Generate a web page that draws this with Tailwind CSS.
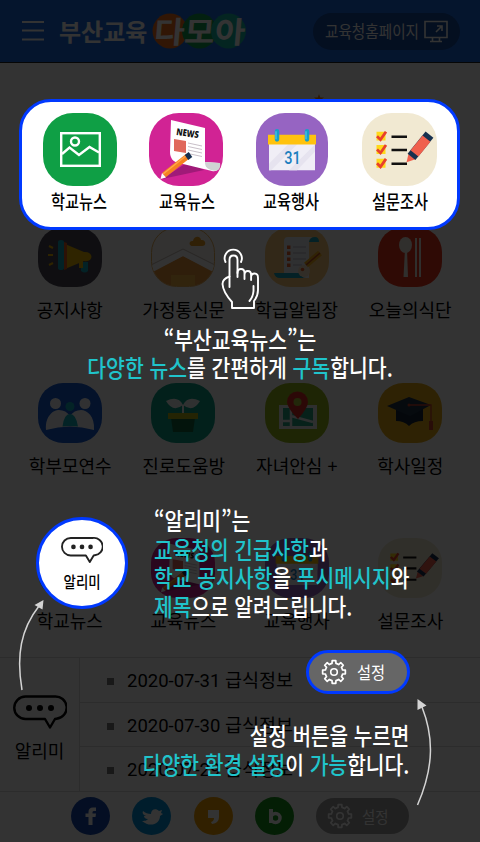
<!DOCTYPE html>
<html lang="ko">
<head>
<meta charset="utf-8">
<title>부산교육 다모아</title>
<script src="https://cdn.jsdelivr.net/npm/@tailwindcss/browser@4"></script>
</head>
<body class="bg-white">
<svg width="0" height="0" class="absolute">
  <defs>
    <symbol id="pic" viewBox="0 0 74 73" preserveAspectRatio="none">
      <rect width="74" height="73" rx="30" fill="#0f9f45"/>
      <g fill="none" stroke="#fff" stroke-width="2.4"><rect x="18.2" y="20.2" width="38.6" height="32.6"/><circle cx="32" cy="28.5" r="4"/><path d="M19 41l7.500-6.500L36 42l10.500-8L56 39.500"/></g>
    </symbol>
    <symbol id="news" viewBox="0 0 74 73" preserveAspectRatio="none">
      <rect width="74" height="73" rx="30" fill="#d12394"/>
      <path d="M13 66l42-9-16-8z" fill="#a01a78"/>
      <path d="M22 7l34 8v34l14 1c1 6-2 9-7 8L30 50c-6-1-9-5-9-11z" fill="#fff"/>
      <path d="M56 49l15 1c1 6-2 8.500-7 7.500C58 56 56 54 56 49z" fill="#cfd3d3"/>
      <text x="27" y="22" transform="rotate(8 27 22)" font-family="Open Sans" font-weight="800" font-size="9.500" textLength="22.500" lengthAdjust="spacingAndGlyphs" fill="#111">NEWS</text>
      <path d="M25 26l12 2v12l-12-2z" fill="#e0685c"/>
      <path d="M39 30l14 3M39 33.500l14 3M39 37l14 3M39 40.500l14 3" stroke="#c9c0c9" stroke-width="1"/>
      <path d="M15 62L39 43" stroke="#f58220" stroke-width="5.500"/><path d="M14 61L38 42" stroke="#ffa64d" stroke-width="1.500"/>
      <path d="M11.500 66l1.500-6 4 4.500z" fill="#fff"/><path d="M37.500 44.500l4-3" stroke="#17304f" stroke-width="6"/>
    </symbol>
    <symbol id="cal" viewBox="0 0 72 72" preserveAspectRatio="none">
      <rect width="72" height="72" rx="29" fill="#9664c2"/>
      <path d="M13 30h46v26.500H13z" fill="#f0eef6"/><path d="M13 50l20-20h9L15 56.500h-2zM33 56.500L59 31v7L41 56.500z" fill="#e6e3ef"/>
      <path d="M12 21.500h48V31H12z" fill="#ffc20e"/>
      <path d="M21 18v8M51 18v8" stroke="#159fc9" stroke-width="4.500" stroke-linecap="round"/><path d="M20 18v8M50 18v8" stroke="#4dc4e2" stroke-width="1.300"/>
      <text x="36.500" y="50.500" text-anchor="middle" font-family="Roboto" font-weight="500" font-size="18" textLength="16.500" lengthAdjust="spacingAndGlyphs" fill="#1c7fbf">31</text>
    </symbol>
    <symbol id="survey" viewBox="0 0 75 74" preserveAspectRatio="none">
      <rect width="75" height="74" rx="30" fill="#f1e9d2"/>
      <path d="M14.500 19h9v9h-9zM14.500 32.500h9v9h-9zM14.500 46.500h9v9h-9z" fill="#ffd91a"/>
      <path d="M15 23.500l3.500 3.500 5.500-8M15 37l3.500 3.500 5.500-8M15 51l3.500 3.500 5.500-8" fill="none" stroke="#e8402c" stroke-width="2.800"/>
      <path d="M29.500 24H45M29.500 37.500H45M29.500 51.500H45" stroke="#111" stroke-width="2.600"/>
      <path d="M44.500 50l2-8.500 7 5.500z" fill="#f0604d"/>
      <path d="M49.500 44.500L67.500 22" stroke="#17304f" stroke-width="10"/><path d="M52.500 41L64.500 26" stroke="#f0604d" stroke-width="10"/>
    </symbol>
    <symbol id="bubble" viewBox="0 0 54 34">
      <path d="M12.500 1.500h29a11 11 0 0 1 2 22.200L42 24l-5 8.500L32 24H12.500a11.200 11.200 0 0 1 0-22.500z" fill="none" stroke="currentColor" stroke-width="2.400" stroke-linejoin="round"/>
      <circle cx="16" cy="13" r="3" fill="currentColor"/><circle cx="27" cy="13" r="3" fill="currentColor"/><circle cx="38" cy="13" r="3" fill="currentColor"/>
    </symbol>
    <symbol id="gear" viewBox="-13 -13 26 26">
      <path d="M8.570-1.980L11.360-1.800V1.800L8.570 1.980A8.800 8.800 0 0 1 7.460 4.660L9.300 6.760 6.760 9.300 4.660 7.460A8.800 8.800 0 0 1 1.980 8.570L1.800 11.360H-1.800L-1.980 8.570A8.800 8.800 0 0 1-4.660 7.460L-6.760 9.300-9.300 6.760-7.460 4.660A8.800 8.800 0 0 1-8.570 1.980L-11.360 1.800V-1.800L-8.570-1.980A8.800 8.800 0 0 1-7.460-4.660L-9.300-6.760-6.760-9.300-4.660-7.460A8.800 8.800 0 0 1-1.980-8.570L-1.800-11.360H1.800L1.980-8.570A8.800 8.800 0 0 1 4.660-7.460L6.760-9.300 9.300-6.760 7.460-4.660A8.800 8.800 0 0 1 8.570-1.980Z" fill="none" stroke="currentColor" stroke-width="1.700" stroke-linejoin="round"/>
      <circle r="3.300" fill="none" stroke="currentColor" stroke-width="1.600"/>
    </symbol>
  </defs>
</svg>

<div class="relative w-[480px] h-[842px] overflow-hidden bg-white text-black font-['Noto_Sans_CJK_KR',sans-serif]">
  <!-- App screen -->
  <div class="flex flex-col h-full">
    <header class="flex items-center h-[63px] shrink-0 bg-[#1c6ae0] border-b border-[#222] pl-[22px] pr-5 text-white">
      <svg width="22" height="20" viewBox="0 0 22 20" stroke="#fff" stroke-width="1.800"><path d="M0 1h22M0 9.500h22M0 18.500h22"/></svg>
      <span class="ml-[15px] w-[88px] text-[24px] leading-none font-bold whitespace-nowrap">부산교육</span>
      <svg class="ml-[4px] overflow-visible" width="96" height="40" viewBox="0 0 96 40">
        <circle cx="19" cy="20" r="17.500" fill="#f2701d"/><circle cx="48.500" cy="20" r="17.500" fill="#12a050"/><circle cx="77.500" cy="20" r="17.500" fill="#14b8a6"/>
        <text x="5" y="31.500" transform="skewX(-5)" font-size="30" font-weight="700" textLength="91" lengthAdjust="spacingAndGlyphs" fill="#fff" font-family="Noto Sans CJK KR">다모아</text>
      </svg>
      <div class="ml-auto flex items-center justify-between w-[147px] h-[37px] rounded-full bg-[#144a9e] pl-3 pr-3">
        <span class="w-[94px] text-[16.5px] leading-none whitespace-nowrap"><span class="inline-block origin-left scale-x-[.885]">교육청홈페이지</span></span>
        <svg width="24" height="23" viewBox="0 0 24 23" fill="none" stroke="#fff" stroke-width="1.600"><path d="M1 1.500h22v16H1zM8.500 17.500v3.500M15.500 17.500v3.500M6 21.500h12M12 12l6-6M13 6h5v5"/></svg>
      </div>
    </header>

    <main class="relative h-[594px] shrink-0 px-[13px] pt-[164px]">
      <svg class="absolute left-[314px] top-[31px]" width="10" height="10" viewBox="0 0 10 10"><path d="M5 0l1.300 3.500H10L7 5.800 8.200 10 5 7.500 1.800 10 3 5.800 0 3.500h3.700z" fill="#f08a24"/></svg>
      <div class="grid grid-cols-4 auto-rows-[155.5px] text-[18px] leading-[26px]">
        <div class="flex flex-col items-center gap-[9px] whitespace-nowrap">
          <svg width="64" height="60" viewBox="0 0 64 60"><rect width="64" height="60" rx="25" fill="#4b4856"/><path d="M27 17l19 8c10-1 10 11 0 9l-19 8z" fill="#e8b400"/><path d="M26 15l3 1v26l-3 1z" fill="#e05a20"/><path d="M20 15q0-2 3-2t3 2v26q0 2-3 2t-3-2zM43 35h7v9q-3 3-7 0z" fill="#10a8bc"/><path d="M41 34h3v6h-3M11 19l4 2M10 28h5M11 38l4-2" stroke="#e8b400" stroke-width="2" fill="#e8b400"/></svg>
          <span>공지사항</span>
        </div>
        <div class="flex flex-col items-center gap-[9px] whitespace-nowrap">
          <svg width="64" height="60" viewBox="0 0 64 60"><defs><clipPath id="hc"><rect x="1" y="1" width="62" height="58" rx="24"/></clipPath></defs><rect x=".5" y=".5" width="63" height="59" rx="25" fill="#fdf8f4" stroke="#eab25c"/><g clip-path="url(#hc)"><path d="M0 46l32-17 32 17v14H0z" fill="#e9963a"/><path d="M0 39l32-16 32 16v6L32 29 0 45z" fill="#fff"/><path d="M0 38l32-16 32 16" fill="none" stroke="#c9bdb5"/><path d="M20 48h24v12H20z" fill="#f2b440"/></g><path d="M42 19c-5 0-4-6 0-5 1-6 8-5 8-1 5-1 6 6 1 6z" fill="#f0a020"/></svg>
          <span class="ml-px">가정통신문</span>
        </div>
        <div class="flex flex-col items-center gap-[9px] whitespace-nowrap">
          <svg width="64" height="60" viewBox="0 0 64 60"><rect width="64" height="60" rx="25" fill="#f9c877"/><path d="M23 10h27q-6 0-6 5v36H19V14q0-4 4-4z" fill="#eceef4"/><path d="M44 15q1-5 6-5 4 0 4 5zM9 46h27q0 5 5 5H15q-5 0-6-5z" fill="#14a7bc"/><path d="M28 20h13M28 26h13M28 32h13M28 38h9" stroke="#cfd3dd" stroke-width="2"/><path d="M22 18.500h3.500V22H22zM22 24.500h3.500V28H22zM22 30.500h3.500V34H22zM22 36.500h3.500V40H22z" fill="#e8622c"/><circle cx="39" cy="44" r="6" fill="#f5dfc2"/><path d="M41 38l14-12" stroke="#f2b01c" stroke-width="6"/><path d="M41 38l14-12" stroke="#c04a20" stroke-width="1.500"/><circle cx="37.500" cy="42.500" r="1.800" fill="#e8622c"/></svg>
          <span>학급알림장</span>
        </div>
        <div class="flex flex-col items-center gap-[9px] whitespace-nowrap">
          <svg width="64" height="60" viewBox="0 0 64 60"><rect width="64" height="60" rx="25" fill="#e8351a"/><ellipse cx="27.500" cy="18" rx="6.500" ry="8" fill="#f0e8e0"/><path d="M27 22h2l1 28h-4.500zM37 11h2v39h-2zM41 11h2v39h-2z" fill="#f0e8e0"/></svg>
          <span>오늘의식단</span>
        </div>

        <div class="flex flex-col items-center gap-[9px] whitespace-nowrap">
          <svg width="64" height="60" viewBox="0 0 64 60"><rect width="64" height="60" rx="25" fill="#1459d2"/><circle cx="17.500" cy="20.500" r="5.500" fill="#f4f6fa"/><circle cx="47" cy="20.500" r="5.500" fill="#f4f6fa"/><path d="M8 47C7 32 16 27 21 27q7 0 11 6 4-6 11-6c6 0 14 6 13 20Q32 40 8 47z" fill="#f4f6fa"/><circle cx="32" cy="23.500" r="4.500" fill="#12b0bd"/><path d="M24.500 43.500Q26 31 32 31t8 12.500q-8-1-15.500 0z" fill="#12b0bd"/></svg>
          <span class="ml-px">학부모연수</span>
        </div>
        <div class="flex flex-col items-center gap-[9px] whitespace-nowrap">
          <svg width="64" height="60" viewBox="0 0 64 60"><rect width="64" height="60" rx="25" fill="#0ca189"/><path d="M32 22v9" stroke="#f0f4f2" stroke-width="2"/><path d="M32 22q-10 8-17-4 12-6 17 4zM32 22q10 8 17-4-12-6-17 4z" fill="#f0f4f2"/><path d="M20 35h24l-2 14H22z" fill="#11663f"/><path d="M17 30h30v6H17z" fill="#b5b315"/></svg>
          <span class="ml-px">진로도움방</span>
        </div>
        <div class="flex flex-col items-center gap-[9px] whitespace-nowrap">
          <svg width="64" height="60" viewBox="0 0 64 60"><rect width="64" height="60" rx="25" fill="#98b71b"/><path d="M14 22h38v24H14z" fill="#e5e8eb"/><path d="M18 25h30v18H18z" fill="#27a584"/><path d="M26 25v18M18 38h8M26 33l22 6" stroke="#e5e8eb" stroke-width="2.500"/><path d="M33 36Q22 25 22 19a10 10 0 0 1 21 0q0 6-10 17z" fill="#dd2b25"/><circle cx="32.500" cy="19" r="4" fill="#a8c334"/></svg>
          <span>자녀안심 +</span>
        </div>
        <div class="flex flex-col items-center gap-[9px] whitespace-nowrap">
          <svg width="64" height="60" viewBox="0 0 64 60"><rect width="64" height="60" rx="25" fill="#e6ab16"/><path d="M18 25l14 6 13-6v13q-9 0-14 5-5-5-13-5z" fill="#16273a"/><path d="M9 23l22-9 22 8-21 11z" fill="#213349"/><path d="M31 22h22v16" fill="none" stroke="#c8402b" stroke-width="1.300"/><circle cx="31" cy="22" r="1.500" fill="#c8402b"/><path d="M51 38h4v9h-4z" fill="#c8402b"/></svg>
          <span>학사일정</span>
        </div>

        <div class="flex flex-col items-center gap-[9px] whitespace-nowrap"><svg width="64" height="60"><use href="#pic" width="64" height="60"/></svg><span>학교뉴스</span></div>
        <div class="flex flex-col items-center gap-[9px] whitespace-nowrap"><svg width="64" height="60"><use href="#news" width="64" height="60"/></svg><span>교육뉴스</span></div>
        <div class="flex flex-col items-center gap-[9px] whitespace-nowrap"><svg width="64" height="60"><use href="#cal" width="64" height="60"/></svg><span>교육행사</span></div>
        <div class="flex flex-col items-center gap-[9px] whitespace-nowrap"><svg width="64" height="60"><use href="#survey" width="64" height="60"/></svg><span>설문조사</span></div>
      </div>
    </main>

    <section class="flex h-[135px] shrink-0 border-y border-[#dcdcdc]">
      <div class="flex flex-col items-center w-[80px] border-r border-[#dcdcdc] pt-[37px] gap-[8px]">
        <svg width="54" height="34"><use href="#bubble" width="54" height="34"/></svg>
        <span class="text-[18px] leading-[26px]">알리미</span>
      </div>
      <ul class="flex-1 flex flex-col divide-y divide-[#dcdcdc] text-[18.5px] font-[Roboto,'Noto_Sans_CJK_KR',sans-serif]">
        <li class="flex-1 flex items-center gap-[13px] pl-[27px] pt-[4px]"><i class="size-[7px] bg-[#777] -mt-px"></i><span>2020-07-31 급식정보</span></li>
        <li class="flex-1 flex items-center gap-[13px] pl-[27px] pt-[4px]"><i class="size-[7px] bg-[#777] -mt-px"></i><span>2020-07-30 급식정보</span></li>
        <li class="flex-1 flex items-center gap-[13px] pl-[27px] pt-[4px]"><i class="size-[7px] bg-[#777] -mt-px"></i><span>2020-07-29 급식정보</span></li>
      </ul>
    </section>

    <footer class="flex-1 flex items-center pl-[71px] pb-[2px] gap-[22.3px]">
      <svg width="39" height="38" viewBox="0 0 39 38"><ellipse cx="19.500" cy="19" rx="19.500" ry="19" fill="#1749ae"/><path d="M17.500 28V20H14.500v-3.500h3V15q0-4.500 4.500-4.500h3V14h-2q-1.500 0-1.500 1.300v1.200H25l-.5 3.500h-3v8z" fill="#fff"/></svg>
      <svg width="39" height="38" viewBox="0 0 39 38"><ellipse cx="19.500" cy="19" rx="19.500" ry="19" fill="#0393dd"/><path d="M10 24c4 0 5-1 6-2-3 0-4-2-4-3h2c-3-1-4-3-3-5 2 2 5 3 8 3 0-5 5-6 8-3l3-1-1 3 2 1-3 2c0 8-10 12-18 5z" fill="#fff"/></svg>
      <svg width="39" height="38" viewBox="0 0 39 38"><ellipse cx="19.500" cy="19" rx="19.500" ry="19" fill="#f3a000"/><path d="M14 13h11v7q0 6-7 7l-1-2q3-1 3-4h-6z" fill="#fff"/></svg>
      <svg width="39" height="38" viewBox="0 0 39 38"><ellipse cx="19.500" cy="19" rx="19.500" ry="19" fill="#16961c"/><path d="M16 12v14" stroke="#fff" stroke-width="4"/><circle cx="20.500" cy="21" r="4.500" fill="none" stroke="#fff" stroke-width="3.500"/></svg>
      <div class="flex items-center w-[93px] h-9 rounded-full bg-[#a0a0a0] pl-[11px] gap-[9px] text-white">
        <svg width="26" height="26"><use href="#gear" width="26" height="26"/></svg>
        <span class="text-[16px] leading-none whitespace-nowrap"><span class="inline-block origin-left scale-x-[.9]">설정</span></span>
      </div>
    </footer>
  </div>

  <!-- Coach-mark overlay -->
  <div class="absolute inset-0 bg-black/80"></div>

  <div class="absolute left-[19px] top-[99px] w-[441px] h-[131px] rounded-[32px] border-[3px] border-[#0039ff] bg-white px-[4px] pt-[11px]">
    <div class="grid grid-cols-[107px_106px_106px_106px] text-[19px] leading-[26px] font-medium">
      <div class="flex flex-col items-center gap-[2px]"><svg width="74" height="73"><use href="#pic" width="74" height="73"/></svg><span class="mr-[2px] scale-x-[.8] whitespace-nowrap">학교뉴스</span></div>
      <div class="flex flex-col items-center gap-[2px]"><svg width="74" height="73"><use href="#news" width="74" height="73"/></svg><span class="ml-[2px] scale-x-[.8] whitespace-nowrap">교육뉴스</span></div>
      <div class="flex flex-col items-center gap-[2px]"><svg width="72" height="73"><use href="#cal" width="72" height="73"/></svg><span class="mr-[2px] scale-x-[.8] whitespace-nowrap">교육행사</span></div>
      <div class="flex flex-col items-center gap-[2px] pl-[3px]"><svg width="75" height="73"><use href="#survey" width="75" height="73"/></svg><span class="scale-x-[.8] whitespace-nowrap">설문조사</span></div>
    </div>
  </div>

  <svg class="absolute left-[220px] top-[248px]" width="42" height="63" viewBox="0 0 42 63" fill="none" stroke="#fff" stroke-width="1.900" stroke-linecap="round" stroke-linejoin="round">
    <path d="M5.500 14A8.600 8.600 0 1 1 21 14"/>
    <path d="M9.500 39V12q0-4.500 4-4.500t4 4.500v17"/>
    <path d="M17.500 25q0-4 3.500-4t3.500 4v6M24.500 27q0-4 3.300-4t3.300 4v5M31.100 29q0-3.500 3.500-3.500T38 30v12q0 6-4 11v7H12v-6Q3 44 2.500 36q0-5 7-7.500M33.500 38v5q-.5 6-4 10"/>
  </svg>

  <div class="absolute left-0 top-[325px] w-full text-[24px] leading-[28px] font-medium text-white">
    <p class="scale-x-[.85] text-center whitespace-nowrap">“부산교육뉴스”는</p>
    <p class="scale-x-[.852] text-center whitespace-nowrap"><span class="text-[#20c4cb]">다양한 뉴스</span>를 간편하게 <span class="text-[#20c4cb]">구독</span>합니다.</p>
  </div>

  <div class="absolute left-[36px] top-[517px] size-[92px] rounded-full border-[3px] border-[#0039ff] bg-white flex flex-col items-center pt-[16px] gap-[5px] text-[#222]">
    <svg width="42" height="28"><use href="#bubble" width="42" height="28"/></svg>
    <span class="scale-x-[.84] text-[16px] leading-[24px] font-medium text-black whitespace-nowrap">알리미</span>
  </div>

  <div class="absolute left-[154px] top-[506px] text-[24px] leading-[28.700px] font-medium text-white">
    <p class="origin-left scale-x-[.85] whitespace-nowrap">“알리미”는</p>
    <p class="origin-left scale-x-[.845] whitespace-nowrap"><span class="text-[#20c4cb]">교육청의 긴급사항</span>과</p>
    <p class="origin-left scale-x-[.85] whitespace-nowrap"><span class="text-[#20c4cb]">학교 공지사항</span>을 <span class="text-[#20c4cb]">푸시메시지</span>와</p>
    <p class="origin-left scale-x-[.845] whitespace-nowrap"><span class="text-[#20c4cb]">제목</span>으로 알려드립니다.</p>
  </div>

  <div class="absolute left-[306px] top-[650px] w-[104px] h-[44px] rounded-full border-[3px] border-[#0039ff] bg-[#666] flex items-center pl-[12px] gap-[10px] text-white">
    <svg width="26" height="26"><use href="#gear" width="26" height="26"/></svg>
    <span class="text-[17px] leading-none whitespace-nowrap"><span class="inline-block origin-left scale-x-[.9] -translate-y-px">설정</span></span>
  </div>

  <div class="absolute right-[71px] top-[720px] text-[24px] leading-[29px] font-medium text-white text-right">
    <p class="origin-right scale-x-[.84] whitespace-nowrap">설정 버튼을 누르면</p>
    <p class="origin-right scale-x-[.848] whitespace-nowrap"><span class="text-[#20c4cb]">다양한 환경 설정</span>이 <span class="text-[#20c4cb]">가능</span>합니다.</p>
  </div>

  <svg class="absolute inset-0" width="480" height="842" viewBox="0 0 480 842" fill="none" stroke="#d4d4d4" stroke-width="1.500">
    <path d="M22 690C16 655 21 629 39 606M417.500 805C435 765 433 735 422 707"/>
    <path d="M43.500 600l-1 9.500-8-4.500zM417.500 699l9 6.500-9 4.500z" fill="#d4d4d4" stroke="none"/>
  </svg>
</div>
</body>
</html>
